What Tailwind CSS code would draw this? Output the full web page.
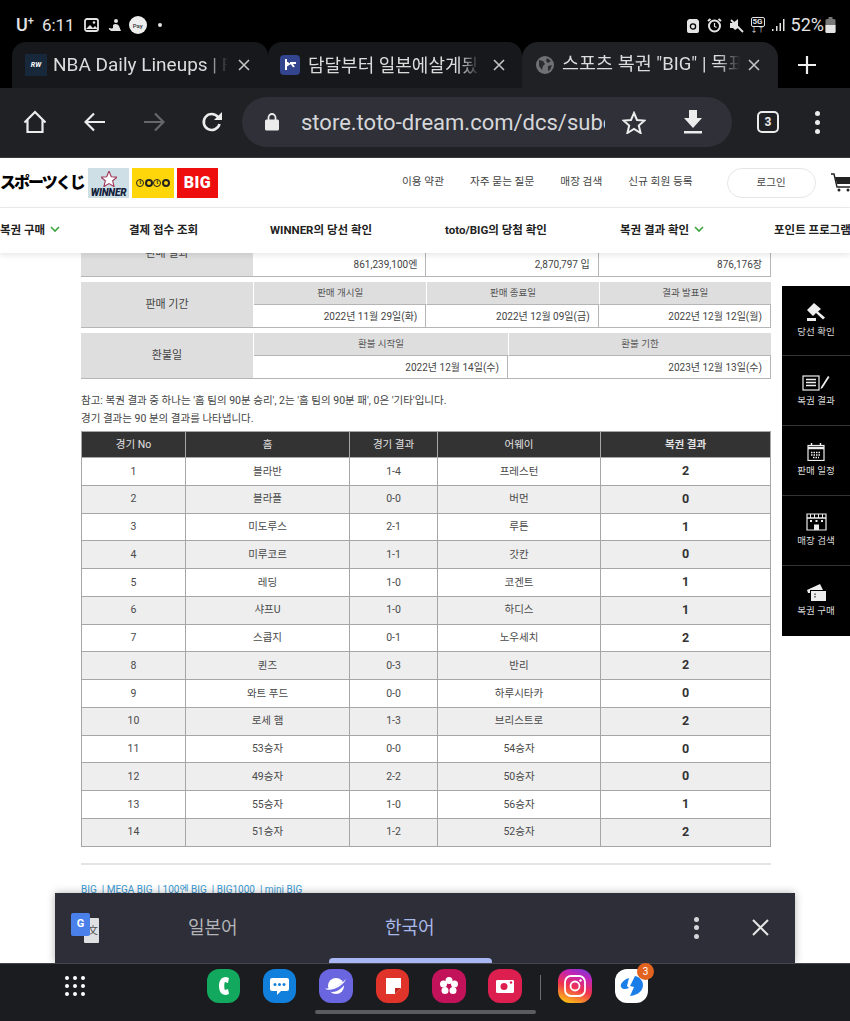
<!DOCTYPE html>
<html lang="ko">
<head>
    <meta charset="UTF-8">
    <meta name="viewport" content="width=device-width, initial-scale=1.0">
    <title>스포츠 복권 "BIG"</title>
    <script src="https://cdn.jsdelivr.net/npm/@tailwindcss/browser@4"></script>
</head>
<body class="bg-black font-['Roboto','Noto_Sans_CJK_KR',sans-serif]">
<div class="relative w-[850px] h-[1021px] overflow-hidden flex flex-col bg-white">

    <!-- Status bar -->
    <div class="h-[42px] shrink-0 bg-black flex items-center pl-[16px] pr-[14px] pt-[8px] text-[#e4e4e4]">
        <span class="text-[18px] font-medium leading-none">U<sup class="text-[11px] align-[2px] leading-none">+</sup></span>
        <span class="text-[17px] ml-[8px] leading-none">6:11</span>
        <svg class="ml-[9px]" width="15" height="14" viewBox="0 0 15 14"><rect x="1" y="1" width="13" height="12" rx="2" fill="none" stroke="#e4e4e4" stroke-width="1.8"/><path d="M2 11l4-4 3 3 2-2 3 3z" fill="#e4e4e4"/><circle cx="10" cy="4.5" r="1.3" fill="#e4e4e4"/></svg>
        <svg class="ml-[9px]" width="14" height="15" viewBox="0 0 14 15"><circle cx="8" cy="3" r="2" fill="#e4e4e4"/><path d="M5 7c2-2 5-1 6 1l2 5H3c-1-1-3-2-2-3 1 0 3 1 4 0z" fill="#e4e4e4"/></svg>
        <span class="ml-[7px] w-[18px] h-[18px] rounded-full bg-[#eee] text-[#333] text-[6px] font-medium flex items-center justify-center">Pay</span>
        <span class="ml-[11px] w-[4px] h-[4px] rounded-full bg-[#e4e4e4]"></span>

        <div class="ml-auto flex items-center">
            <svg width="12" height="15" viewBox="0 0 12 15"><path d="M2 1h8l2 2v10a2 2 0 0 1-2 2H2a2 2 0 0 1-2-2V3z" fill="#e4e4e4"/><circle cx="6" cy="8.5" r="2.6" fill="none" stroke="#000" stroke-width="1.3"/></svg>
            <svg class="ml-[8px]" width="15" height="15" viewBox="0 0 15 15"><circle cx="7.5" cy="8" r="5.5" fill="none" stroke="#e4e4e4" stroke-width="2"/><path d="M7.5 5v3.5l2 1" fill="none" stroke="#e4e4e4" stroke-width="1.2"/><path d="M1 3l2.5-2M14 3l-2.5-2" stroke="#e4e4e4" stroke-width="2"/></svg>
            <svg class="ml-[7px]" width="15" height="15" viewBox="0 0 15 15"><path d="M1 5h3l5-4v9l-3 2-2-2H1z" fill="#e4e4e4"/><path d="M2 2l12 12" stroke="#e4e4e4" stroke-width="1.8"/></svg>
            <div class="ml-[7px] flex flex-col items-center leading-none">
                <span class="text-[8px] font-bold border border-[#e4e4e4] rounded-[2px] px-[1px] leading-[8px]">5G</span>
                <span class="text-[7px] leading-[7px]">↓↑</span>
            </div>
            <svg class="ml-[6px]" width="14" height="14" viewBox="0 0 14 14"><rect x="1" y="11" width="1.5" height="2" fill="#e4e4e4"/><rect x="5" y="8" width="1.5" height="5" fill="#e4e4e4"/><rect x="8.5" y="5" width="1.5" height="8" fill="#e4e4e4"/><rect x="12" y="1" width="1.5" height="12" fill="#e4e4e4"/></svg>
            <span class="text-[18px] ml-[6px] leading-none">52%</span>
            <svg class="ml-[1px]" width="11" height="16" viewBox="0 0 11 16"><rect x="3.5" y="0" width="4" height="2" fill="#777"/><rect x="0.5" y="2" width="10" height="14" rx="1.5" fill="#777"/><path d="M0.5 8h10v6.5a1.5 1.5 0 0 1-1.5 1.5H2a1.5 1.5 0 0 1-1.5-1.5z" fill="#e4e4e4"/></svg>
        </div>
    </div>

    <!-- Tab strip -->
    <div class="h-[46px] shrink-0 bg-black flex pl-[12px] text-[#dcdcdc]">
        <div class="w-[256px] rounded-t-[14px] bg-[#17181b] flex items-center pl-[13px] pr-[18px]">
            <span class="w-[22px] h-[22px] shrink-0 bg-[#16283a] text-white text-[7px] font-bold italic flex items-center justify-center">RW</span>
            <span class="ml-[6px] text-[19px] whitespace-nowrap overflow-hidden w-[175px] [mask-image:linear-gradient(to_right,black_88%,transparent)]">NBA Daily Lineups | F</span>
            <svg class="ml-auto" width="12" height="12" viewBox="0 0 12 12"><path d="M1 1l10 10M11 1L1 11" stroke="#c4c4c4" stroke-width="1.6"/></svg>
        </div>
        <div class="w-[254px] rounded-t-[14px] bg-[#17181b] flex items-center pl-[12px] pr-[17px]">
            <span class="w-[20px] h-[20px] shrink-0 rounded-[4px] bg-[#33458f] flex items-center justify-center">
                <svg width="14" height="12" viewBox="0 0 14 12"><path d="M3 0v11M3 3l3 2-3 2M7 4h6M8 4l3 4" fill="none" stroke="#fff" stroke-width="2"/></svg>
            </span>
            <span class="ml-[8px] text-[18px] whitespace-nowrap overflow-hidden w-[172px] [mask-image:linear-gradient(to_right,black_88%,transparent)]">담달부터 일본에살게됬</span>
            <svg class="ml-auto" width="12" height="12" viewBox="0 0 12 12"><path d="M1 1l10 10M11 1L1 11" stroke="#c4c4c4" stroke-width="1.6"/></svg>
        </div>
        <div class="w-[256px] rounded-t-[16px] bg-[#202125] flex items-center pl-[14px] pr-[18px]">
            <svg class="shrink-0" width="18" height="18" viewBox="0 0 18 18"><circle cx="9" cy="9" r="9" fill="#6f7175"/><path d="M3 4l4 1 2 3-2 2-1 4-3-4zM11 2l4 3-3 2-2-2zM12 10l4-1-2 5-2 1z" fill="#2b2c30"/></svg>
            <span class="ml-[8px] text-[18.5px] whitespace-nowrap overflow-hidden w-[178px] [mask-image:linear-gradient(to_right,black_88%,transparent)]">스포츠 복권 "BIG" | 목표</span>
            <svg class="ml-auto" width="12" height="12" viewBox="0 0 12 12"><path d="M1 1l10 10M11 1L1 11" stroke="#c4c4c4" stroke-width="1.6"/></svg>
        </div>
        <svg class="ml-[20px] mt-[14px]" width="18" height="18" viewBox="0 0 18 18"><path d="M9 0v18M0 9h18" stroke="#f0f0f0" stroke-width="2.2"/></svg>
    </div>

    <!-- Toolbar -->
    <div class="h-[70px] shrink-0 bg-[#202125] border-b border-[#3a3b40] flex items-center pb-[1px]">
        <svg class="ml-[23px]" width="24" height="24" viewBox="0 0 24 24"><path d="M1.5 12.5L12 2l10.5 10.5M4.5 10v12h15V10" fill="none" stroke="#ececec" stroke-width="2.2"/></svg>
        <svg class="ml-[37px]" width="22" height="20" viewBox="0 0 22 20"><path d="M21 10H2M10 1.5L1.5 10l8.5 8.500" fill="none" stroke="#ececec" stroke-width="2.2"/></svg>
        <svg class="ml-[37px]" width="22" height="20" viewBox="0 0 22 20"><path d="M1 10h19M12 1.5l8.5 8.500-8.500 8.500" fill="none" stroke="#66676b" stroke-width="2.2"/></svg>
        <svg class="ml-[36px]" width="22" height="22" viewBox="0 0 22 22"><path d="M18.5 13a8 8 0 1 1-1.5-7" fill="none" stroke="#ececec" stroke-width="2.6"/><path d="M21 1v8h-8z" fill="#ececec"/></svg>
        <div class="ml-[19px] w-[490px] h-[50px] rounded-full bg-[#2f3038] flex items-center pl-[23px]">
            <svg width="14" height="18" viewBox="0 0 14 18"><path d="M3.5 7V4.5a3.5 3.5 0 0 1 7 0V7" fill="none" stroke="#ececec" stroke-width="1.8"/><rect y="6.5" width="14" height="11" rx="1.5" fill="#ececec"/></svg>
            <span class="ml-[22px] w-[304px] overflow-hidden whitespace-nowrap text-[22px] text-[#d6d7da]">store.toto-dream.com/dcs/subc</span>
            <svg class="ml-[17px]" width="24" height="23" viewBox="0 0 24 23"><path d="M12 2l3 7 7.500 .6-5.700 5 1.800 7.400L12 18l-6.600 4 1.800-7.400-5.700-5L9 9z" fill="none" stroke="#ececec" stroke-width="2"/></svg>
            <svg class="ml-[37px]" width="20" height="24" viewBox="0 0 20 24"><path d="M6 0h8v8h5l-9 10L1 8h5zM1 21h18v2.500H1z" fill="#ececec"/></svg>
        </div>
        <span class="ml-[25px] w-[22px] h-[22px] border-2 border-[#ececec] rounded-[5px] text-[#ececec] text-[12px] font-bold flex items-center justify-center">3</span>
        <div class="ml-[36px] flex flex-col gap-[4px]">
            <span class="w-[5px] h-[5px] rounded-full bg-[#ececec]"></span>
            <span class="w-[5px] h-[5px] rounded-full bg-[#ececec]"></span>
            <span class="w-[5px] h-[5px] rounded-full bg-[#ececec]"></span>
        </div>
    </div>

    <!-- Site header -->
    <header class="h-[50px] shrink-0 bg-white border-b border-[#eeeeee] flex items-center relative z-20">
        <span class="w-[88px] shrink-0 text-[16px] font-black text-black tracking-[-2px] whitespace-nowrap leading-none">スポーツくじ</span>
        <div class="w-[41px] h-[30px] shrink-0 bg-[#cfdfe6] flex flex-col items-center justify-end overflow-hidden">
            <svg width="16" height="16" viewBox="0 0 14 14"><path d="M7 0l2 5 5 .4-3.800 3.200 1.200 5L7 11l-4.400 2.600 1.200-5L0 5.400 5 5z" fill="#fff" stroke="#a33b5d" stroke-width="1"/></svg>
            <span class="text-[10px] font-black italic text-[#14223c] leading-[11px] tracking-[-0.2px]">WINNER</span>
        </div>
        <div class="ml-[3px] w-[42px] h-[30px] shrink-0 bg-[#ffd60a] flex items-center justify-center gap-[0.5px]">
            <span class="w-[8px] h-[8px] rounded-full border border-[#222] text-[5px] leading-none font-bold text-[#222] flex items-center justify-center">t</span>
            <span class="w-[8px] h-[8px] rounded-full border-2 border-[#222] text-[4px] leading-none text-[#222] flex items-center justify-center"></span>
            <span class="w-[8px] h-[8px] rounded-full border border-[#222] text-[5px] leading-none font-bold text-[#222] flex items-center justify-center">t</span>
            <span class="w-[8px] h-[8px] rounded-full border-2 border-[#222] text-[4px] leading-none text-[#222] flex items-center justify-center"></span>
        </div>
        <div class="ml-[3px] w-[41px] h-[30px] shrink-0 bg-[#ee0e0e] flex items-center justify-center text-[16px] font-black text-white leading-none tracking-[0.5px]">BIG</div>

        <nav class="ml-[184px] shrink-0 whitespace-nowrap flex gap-[26px] text-[10.7px] text-[#444]">
            <span>이용 약관</span>
            <span>자주 묻는 질문</span>
            <span>매장 검색</span>
            <span>신규 회원 등록</span>
        </nav>
        <span class="ml-[34px] w-[89px] h-[30px] shrink-0 border border-[#e6e6e6] rounded-full flex items-center justify-center text-[10.5px] text-[#444]">로그인</span>
        <svg class="ml-[15px] shrink-0" width="22" height="20" viewBox="0 0 22 20"><path d="M0 1h3l3 13h14" fill="none" stroke="#222" stroke-width="1.4"/><path d="M4 4h18v7H6z" fill="#222"/><circle cx="8" cy="17" r="1.500" fill="#222"/><circle cx="17" cy="17" r="1.500" fill="#222"/></svg>
    </header>

    <!-- Main nav -->
    <div class="h-[45px] shrink-0 bg-white flex items-center relative z-20 shadow-[0_2px_6px_rgba(0,0,0,0.10)] text-[11.5px] font-bold text-[#222] whitespace-nowrap">
        <span class="w-[129px] shrink-0 flex items-center">복권 구매
            <svg class="ml-[5px] -mt-[2px]" width="10" height="7" viewBox="0 0 10 7"><path d="M1 1l4 4 4-4" fill="none" stroke="#3ca33c" stroke-width="1.600"/></svg>
        </span>
        <span class="w-[141px] shrink-0">결제 접수 조회</span>
        <span class="w-[175px] shrink-0">WINNER의 당선 확인</span>
        <span class="w-[175px] shrink-0">toto/BIG의 당첨 확인</span>
        <span class="w-[154px] shrink-0 flex items-center">복권 결과 확인
            <svg class="ml-[5px] -mt-[2px]" width="10" height="7" viewBox="0 0 10 7"><path d="M1 1l4 4 4-4" fill="none" stroke="#3ca33c" stroke-width="1.600"/></svg>
        </span>
        <span class="shrink-0">포인트 프로그램</span>
    </div>

    <!-- Scrolled page content -->
    <main class="flex-1 min-h-0 overflow-hidden bg-white pl-[81px] text-[#444]">
        <div class="w-[690px] -mt-[22px]">
            <!-- 판매 결과 -->
            <div class="flex h-[46px] bg-[#dedede] border-b border-[#b5b5b5]">
                <div class="w-[172px] shrink-0 flex items-center justify-center pt-[2px] text-[11px] text-[#444]">판매 결과</div>
                <div class="flex-1 flex text-[10px]">
                    <div class="flex-1 flex flex-col border-l border-white"><div class="h-[22px] border-b border-[#b5b5b5]"></div><div class="flex-1 bg-white flex items-center justify-end pr-[8px] border-r border-[#b5b5b5]">861,239,100엔</div></div>
                    <div class="flex-1 flex flex-col"><div class="h-[22px] border-b border-[#b5b5b5]"></div><div class="flex-1 bg-white flex items-center justify-end pr-[8px] border-r border-[#b5b5b5]">2,870,797 입</div></div>
                    <div class="flex-1 flex flex-col"><div class="h-[22px] border-b border-[#b5b5b5]"></div><div class="flex-1 bg-white flex items-center justify-end pr-[8px] border-r border-[#b5b5b5]">876,176장</div></div>
                </div>
            </div>
            <!-- 판매 기간 -->
            <div class="mt-[5px] flex h-[46px] bg-[#dedede] border-b border-[#b5b5b5]">
                <div class="w-[172px] shrink-0 flex items-center justify-center pt-[2px] text-[11px] text-[#444]">판매 기간</div>
                <div class="flex-1 flex text-[10px]">
                    <div class="flex-1 flex flex-col border-l border-white"><div class="h-[23px] border-b border-[#b5b5b5] flex items-center justify-center text-[9.5px] text-[#555]">판매 개시일</div><div class="flex-1 bg-white flex items-center justify-end pr-[8px] border-r border-[#b5b5b5]">2022년 11월 29일(화)</div></div>
                    <div class="flex-1 flex flex-col"><div class="h-[23px] border-b border-[#b5b5b5] border-l border-l-white flex items-center justify-center text-[9.5px] text-[#555]">판매 종료일</div><div class="flex-1 bg-white flex items-center justify-end pr-[8px] border-r border-[#b5b5b5]">2022년 12월 09일(금)</div></div>
                    <div class="flex-1 flex flex-col"><div class="h-[23px] border-b border-[#b5b5b5] border-l border-l-white flex items-center justify-center text-[9.5px] text-[#555]">결과 발표일</div><div class="flex-1 bg-white flex items-center justify-end pr-[8px] border-r border-[#b5b5b5]">2022년 12월 12일(월)</div></div>
                </div>
            </div>
            <!-- 환불일 -->
            <div class="mt-[5px] flex h-[46px] bg-[#dedede] border-b border-[#b5b5b5]">
                <div class="w-[172px] shrink-0 flex items-center justify-center pt-[2px] text-[11px] text-[#444]">환불일</div>
                <div class="flex-1 flex text-[10px]">
                    <div class="w-[255px] flex flex-col border-l border-white"><div class="h-[23px] border-b border-[#b5b5b5] flex items-center justify-center text-[9.5px] text-[#555]">환불 시작일</div><div class="flex-1 bg-white flex items-center justify-end pr-[8px] border-r border-[#b5b5b5]">2022년 12월 14일(수)</div></div>
                    <div class="flex-1 flex flex-col"><div class="h-[23px] border-b border-[#b5b5b5] border-l border-l-white flex items-center justify-center text-[9.5px] text-[#555]">환불 기한</div><div class="flex-1 bg-white flex items-center justify-end pr-[8px] border-r border-[#b5b5b5]">2023년 12월 13일(수)</div></div>
                </div>
            </div>

            <p class="mt-[13px] text-[10.5px] leading-[18px] text-[#444]">참고: 복권 결과 중 하나는 '홈 팀의 90분 승리', 2는 '홈 팀의 90분 패', 0은 '기타'입니다.<br>경기 결과는 90 분의 결과를 나타냅니다.</p>

            <table class="mt-[3px] w-[690px] table-fixed border-collapse text-center text-[10.5px] text-[#4a4a4a] [&_td]:h-[27.77px] [&_td]:p-0 [&_td]:border [&_td]:border-[#a6a6a6] [&_tbody_tr:nth-child(even)]:bg-[#eeeeee] [&_td:last-child]:font-bold [&_td:last-child]:text-[12.5px] [&_td:last-child]:text-[#333]">
                <thead>
                    <tr class="bg-[#333333] text-[#e2e2e2] h-[26px]">
                        <th class="w-[104px] font-normal border border-[#a6a6a6]">경기 No</th>
                        <th class="w-[164px] font-normal border border-[#a6a6a6]">홈</th>
                        <th class="w-[88px] font-normal border border-[#a6a6a6]">경기 결과</th>
                        <th class="w-[163px] font-normal border border-[#a6a6a6]">어웨이</th>
                        <th class="font-bold border border-[#a6a6a6]">복권 결과</th>
                    </tr>
                </thead>
                <tbody>
                    <tr><td>1</td><td>블라반</td><td>1-4</td><td>프레스턴</td><td>2</td></tr>
                    <tr><td>2</td><td>블라플</td><td>0-0</td><td>버먼</td><td>0</td></tr>
                    <tr><td>3</td><td>미도루스</td><td>2-1</td><td>루튼</td><td>1</td></tr>
                    <tr><td>4</td><td>미루코르</td><td>1-1</td><td>갓칸</td><td>0</td></tr>
                    <tr><td>5</td><td>레딩</td><td>1-0</td><td>코겐트</td><td>1</td></tr>
                    <tr><td>6</td><td>샤프U</td><td>1-0</td><td>하디스</td><td>1</td></tr>
                    <tr><td>7</td><td>스콥지</td><td>0-1</td><td>노우세치</td><td>2</td></tr>
                    <tr><td>8</td><td>퀸즈</td><td>0-3</td><td>반리</td><td>2</td></tr>
                    <tr><td>9</td><td>와트 푸드</td><td>0-0</td><td>하루시타카</td><td>0</td></tr>
                    <tr><td>10</td><td>로세 햄</td><td>1-3</td><td>브리스트로</td><td>2</td></tr>
                    <tr><td>11</td><td>53승자</td><td>0-0</td><td>54승자</td><td>0</td></tr>
                    <tr><td>12</td><td>49승자</td><td>2-2</td><td>50승자</td><td>0</td></tr>
                    <tr><td>13</td><td>55승자</td><td>1-0</td><td>56승자</td><td>1</td></tr>
                    <tr><td>14</td><td>51승자</td><td>1-2</td><td>52승자</td><td>2</td></tr>
                </tbody>
            </table>

            <div class="mt-[16px] h-[2px] bg-[#e4e4e4]"></div>
            <p class="mt-[19px] text-[10px] text-[#3a97cf] whitespace-nowrap leading-[12px]">BIG &nbsp;| MEGA BIG &nbsp;| 100엔 BIG &nbsp;| BIG1000 &nbsp;| mini BIG</p>
        </div>
    </main>

    <!-- Floating side menu -->
    <aside class="absolute z-10 left-[782px] top-[286px] w-[68px] h-[350px] bg-black flex flex-col text-[9.5px] text-[#dcdcdc]">
        <div class="h-[70px] flex flex-col items-center justify-center gap-[3px] border-b border-[#333]">
            <svg width="20" height="20" viewBox="0 0 20 20"><path d="M8 1l7 6-3 2.500 7 6-2 2-7-6.500-3 3-6-6zM1 16h9v3H1z" fill="#eee"/></svg>
            <span>당선 확인</span>
        </div>
        <div class="h-[70px] flex flex-col items-center justify-center gap-[3px] border-b border-[#333]">
            <svg width="28" height="18" viewBox="0 0 28 18"><rect x="1" y="3" width="16" height="14" fill="none" stroke="#eee" stroke-width="1.200"/><path d="M4 6.500h10M4 9.500h10M4 12.500h10" stroke="#eee" stroke-width="1.500"/><path d="M19 14l7-11 1.500 1-7 11-2 1z" fill="#eee"/></svg>
            <span>복권 결과</span>
        </div>
        <div class="h-[70px] flex flex-col items-center justify-center gap-[3px] border-b border-[#333]">
            <svg width="18" height="18" viewBox="0 0 18 18"><rect x="1" y="2.500" width="16" height="15" fill="none" stroke="#eee" stroke-width="1.200"/><path d="M1 5h16" stroke="#eee" stroke-width="2.500"/><path d="M4.500 0v3M13.500 0v3" stroke="#eee" stroke-width="1.500"/><path d="M4 9.500h10M4 12h10M6 14.500h6" stroke="#eee" stroke-width="1.300" stroke-dasharray="1.500 1"/></svg>
            <span>판매 일정</span>
        </div>
        <div class="h-[70px] flex flex-col items-center justify-center gap-[3px] border-b border-[#333]">
            <svg width="21" height="18" viewBox="0 0 21 18"><path d="M1 1h19v16H1z" fill="none" stroke="#eee" stroke-width="1.200"/><path d="M1 5h19" stroke="#eee" stroke-width="1.500"/><path d="M4.500 1v4M8.500 1v4M12.500 1v4M16.500 1v4" stroke="#eee"/><path d="M4 8h2M9.500 8h2M15 8h2" stroke="#eee" stroke-width="2"/><rect x="8" y="11.500" width="5" height="5.500" fill="#eee"/></svg>
            <span>매장 검색</span>
        </div>
        <div class="h-[70px] flex flex-col items-center justify-center gap-[3px]">
            <svg width="21" height="17" viewBox="0 0 21 17"><path d="M1 6l13-6 3 6z" fill="#eee"/><path d="M1 6h3v3H2z" fill="#eee"/><rect x="5" y="7" width="15" height="10" fill="#eee"/><path d="M9 9.500v5" stroke="#000" stroke-width="1" stroke-dasharray="1.500 1"/></svg>
            <span>복권 구매</span>
        </div>
    </aside>

    <!-- Translate bar -->
    <div class="absolute z-30 left-[55px] top-[893px] w-[740px] h-[70px] bg-[#2d2e37] shadow-[0_0_8px_rgba(0,0,0,0.3)]">
        <div class="flex items-center h-full pb-[1px]">
            <div class="relative ml-[16px] w-[28px] h-[30px] shrink-0">
                <div class="absolute left-[13px] top-[5px] w-[15px] h-[25px] bg-[#dfe0e2] rounded-[1px] text-[10px] text-[#555] flex items-center justify-end pr-[1px]">文</div>
                <div class="absolute left-0 top-0 w-[19px] h-[23px] bg-[#4a80ea] rounded-[2px] text-white text-[11px] font-bold flex items-center justify-center">G</div>
            </div>
            <span class="w-[270px] pl-[89px] pr-[0px] text-[18px] text-[#b3b4b8] shrink-0">일본어</span>
            <span class="text-[18px] text-[#a9b8ea] ml-[16px] shrink-0">한국어</span>
            <div class="ml-auto flex flex-col gap-[3.5px] mr-[53px]">
                <span class="w-[5px] h-[5px] rounded-full bg-[#d4d5d8]"></span>
                <span class="w-[5px] h-[5px] rounded-full bg-[#d4d5d8]"></span>
                <span class="w-[5px] h-[5px] rounded-full bg-[#d4d5d8]"></span>
            </div>
            <svg class="mr-[26px]" width="17" height="17" viewBox="0 0 17 17"><path d="M1 1l15 15M16 1L1 16" stroke="#e6e6e6" stroke-width="2"/></svg>
        </div>
        <div class="absolute left-[274px] bottom-0 w-[163px] h-[5px] bg-[#a9b8f5] rounded-t-[4px]"></div>
    </div>

    <!-- Dock -->
    <div class="absolute z-30 left-0 bottom-0 w-[850px] h-[58px] bg-[#1b1c20] border-t border-[#45464d]">
        <div class="flex items-start pt-[5px]">
            <div class="ml-[65px] mt-[7px] grid grid-cols-3 gap-x-[4px] gap-y-[4px] w-[20px]">
                <span class="w-[4px] h-[4px] rounded-full bg-white"></span><span class="w-[4px] h-[4px] rounded-full bg-white"></span><span class="w-[4px] h-[4px] rounded-full bg-white"></span>
                <span class="w-[4px] h-[4px] rounded-full bg-white"></span><span class="w-[4px] h-[4px] rounded-full bg-white"></span><span class="w-[4px] h-[4px] rounded-full bg-white"></span>
                <span class="w-[4px] h-[4px] rounded-full bg-white"></span><span class="w-[4px] h-[4px] rounded-full bg-white"></span><span class="w-[4px] h-[4px] rounded-full bg-white"></span>
            </div>
            <div class="ml-[122px] flex gap-[23px] items-start">
                <span class="w-[33px] h-[34px] rounded-[12px] bg-[#12a85e] flex items-center justify-center">
                    <svg width="14" height="20" viewBox="0 0 14 20"><path d="M9 1C4 1 2 5 2 10s2 9 7 9l3-1-1-5-3 1c-1-1-1-7 0-8l3 1 1-5z" fill="#fff"/></svg>
                </span>
                <span class="w-[33px] h-[34px] rounded-[12px] bg-[#1180dc] flex items-center justify-center">
                    <svg width="21" height="21" viewBox="0 0 21 21"><path d="M3 2h15a2 2 0 0 1 2 2v9a2 2 0 0 1-2 2h-6l-4 4v-4H3a2 2 0 0 1-2-2V4a2 2 0 0 1 2-2z" fill="#fff"/><circle cx="6" cy="8.500" r="1.500" fill="#1180dc"/><circle cx="10.500" cy="8.500" r="1.500" fill="#1180dc"/><circle cx="15" cy="8.500" r="1.500" fill="#1180dc"/></svg>
                </span>
                <span class="w-[34px] h-[34px] rounded-[12px] bg-[#6a66e0] flex items-center justify-center">
                    <svg width="26" height="24" viewBox="0 0 26 24"><circle cx="13" cy="12" r="8" fill="#fff"/><path d="M3 15C8 16 18 11 23 5c2 2-3 9-9 12-5 2-10 1-11-2z" fill="#6a66e0"/><path d="M2 14c4 2 15-2 21-9-3 8-18 14-21 9z" fill="#fff"/></svg>
                </span>
                <span class="w-[33px] h-[34px] rounded-[12px] bg-[#e0332a] flex items-center justify-center">
                    <svg width="20" height="20" viewBox="0 0 20 20"><path d="M3 2h15v10l-6 6H3z" fill="#fff"/><path d="M12 12h6l-6 6z" fill="#c0271f"/></svg>
                </span>
                <span class="w-[34px] h-[34px] rounded-[12px] bg-[#c2125a] flex items-center justify-center">
                    <svg width="20" height="20" viewBox="0 0 20 20"><g fill="#fff"><circle cx="10" cy="4.500" r="3.500"/><circle cx="15.500" cy="8" r="3.500"/><circle cx="14" cy="14.500" r="3.500"/><circle cx="6" cy="14.500" r="3.500"/><circle cx="4.500" cy="8" r="3.500"/></g><circle cx="10" cy="10" r="1.500" fill="#c2125a"/></svg>
                </span>
                <span class="-ml-[1px] w-[34px] h-[34px] rounded-[12px] bg-[#dd1f50] flex items-center justify-center">
                    <svg width="20" height="16" viewBox="0 0 20 16"><path d="M2 2h16a1.500 1.500 0 0 1 1 1.500v10a1.500 1.500 0 0 1-1.500 1.500h-15A1.500 1.500 0 0 1 1 13.500v-10A1.500 1.500 0 0 1 2 2z" fill="#fff"/><circle cx="9" cy="8.500" r="3.500" fill="#dd1f50"/><circle cx="16" cy="4.500" r="1.200" fill="#dd1f50"/></svg>
                </span>
                <span class="-ml-[5px] mt-[6px] w-[1px] h-[25px] bg-[#6a6b70]"></span>
                <span class="-ml-[6px] w-[34px] h-[34px] rounded-[12px] bg-[linear-gradient(20deg,#fdc90f_5%,#f0334f_45%,#c224b4_75%,#6b3fe0)] flex items-center justify-center">
                    <svg width="22" height="22" viewBox="0 0 22 22"><rect x="1" y="1" width="20" height="20" rx="6" fill="none" stroke="#fff" stroke-width="1.800"/><circle cx="11" cy="11" r="4.500" fill="none" stroke="#fff" stroke-width="1.800"/><circle cx="16.500" cy="5.500" r="1.200" fill="#fff"/></svg>
                </span>
                <span class="relative w-[33px] h-[34px] rounded-[12px] bg-white flex items-center justify-center">
                    <svg width="24" height="22" viewBox="0 0 24 22"><path d="M15 1L10 11l4 1-4 9C19 20 23 15 23 10c0-4-3-8-8-9zM9 3C3 5 0 9 1 12c1 2 4 3 8 1l-2-2z" fill="#1b7ee8"/></svg>
                    <span class="absolute -right-[6px] -top-[6px] w-[17px] h-[17px] rounded-full bg-[#e2631f] text-white text-[10px] flex items-center justify-center">3</span>
                </span>
            </div>
        </div>
        <div class="absolute left-[315px] top-[46px] w-[221px] h-[4px] rounded-full bg-[#5b5b60]"></div>
    </div>
</div>
</body>
</html>
